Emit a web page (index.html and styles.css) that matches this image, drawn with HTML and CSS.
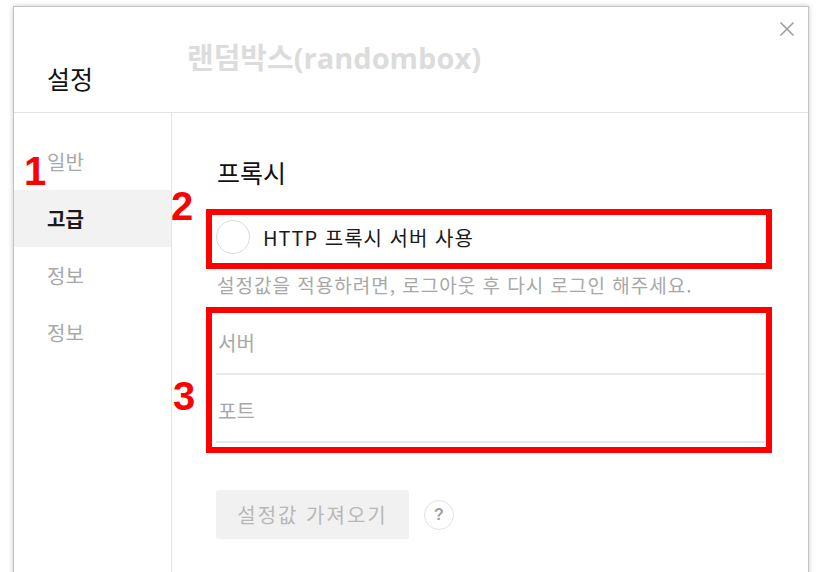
FILE: index.html
```html
<!DOCTYPE html>
<html lang="ko">
<head>
  <meta charset="UTF-8">
  <meta name="viewport" content="width=device-width, initial-scale=1.0">
  <title>설정</title>
  <link rel="stylesheet" href="styles.css">
</head>
<body>
  <div class="dialog">
    <div class="header">
      <h2>설정</h2>
      <span class="watermark">랜덤박스(randombox)</span>
      <button class="close" aria-label="닫기">
        <svg width="16" height="16" viewBox="0 0 16 16">
          <path d="M1.5 1.5 L14.5 14.5 M14.5 1.5 L1.5 14.5" stroke="#9a9a9a" stroke-width="1.5" fill="none"/>
        </svg>
      </button>
    </div>
    <div class="main">
      <ul class="sidebar">
        <li>일반</li>
        <li class="active">고급</li>
        <li>정보</li>
        <li>정보</li>
      </ul>
      <div class="content">
        <h3>프록시</h3>
        <label class="radio-row">
          <span class="radio"></span>
          <span>HTTP 프록시 서버 사용</span>
        </label>
        <p class="hint">설정값을 적용하려면, 로그아웃 후 다시 로그인 해주세요.</p>
        <div class="field">서버</div>
        <div class="field">포트</div>
        <div class="actions">
          <button class="import">설정값 가져오기</button>
          <span class="help">?</span>
        </div>
      </div>
    </div>
  </div>

  <!-- annotation marks -->
  <span class="mark mark-1">1</span>
  <span class="mark mark-2">2</span>
  <span class="mark mark-3">3</span>
  <div class="redbox box-2"></div>
  <div class="redbox box-3"></div>
</body>
</html>
```

FILE: styles.css
```css
body {
  margin: 0;
  background: #ffffff;
  font-family: "Noto Sans CJK KR", "Noto Sans", sans-serif;
  color: #222;
  overflow: hidden;
  height: 572px;
  position: relative;
}

.dialog {
  position: relative;
  margin: 6px 0 0 13px;
  width: 796px;
  height: 640px;
  box-sizing: border-box;
  border: 1px solid #c4c4c4;
  box-shadow: 0 0 5px rgba(0, 0, 0, 0.22);
  background: #fff;
}

.header {
  height: 105px;
  border-bottom: 1px solid #e3e3e3;
  box-sizing: content-box;
}

.header h2 {
  margin: 0;
  padding: 56px 0 0 33px;
  font-size: 25px;
  font-weight: 400;
  line-height: 30px;
  color: #111;
}

.watermark {
  position: absolute;
  left: 173px;
  top: 33px;
  font-family: "Open Sans", "Noto Sans CJK KR", sans-serif;
  font-weight: 700;
  font-size: 29px;
  line-height: 36px;
  color: #dcdcdc;
}

.close {
  position: absolute;
  right: 13px;
  top: 14px;
  padding: 0;
  border: none;
  background: none;
  width: 16px;
  height: 16px;
}

.main {
  display: flex;
  height: 530px;
}

.sidebar {
  list-style: none;
  margin: 0;
  padding: 20px 0 0 0;
  width: 158px;
  box-sizing: border-box;
  border-right: 1px solid #e3e3e3;
}

.sidebar li {
  height: 57px;
  line-height: 57px;
  padding-left: 33px;
  font-size: 20px;
  color: #a8a8a8;
}

.sidebar li.active {
  background: #f2f2f2;
  color: #1a1a1a;
  font-weight: 700;
}

.content {
  flex: 1;
  padding: 0 42px 0 44px;
}

.content h3 {
  margin: 44px 0 0 1px;
  font-size: 25px;
  font-weight: 400;
  line-height: 30px;
  color: #111;
}

.radio-row {
  display: flex;
  align-items: center;
  gap: 13px;
  height: 44px;
  margin-top: 28px;
  font-size: 20px;
  letter-spacing: 1px;
  color: #1a1a1a;
}

.radio {
  width: 34px;
  height: 34px;
  box-sizing: border-box;
  border: 1px solid #dcdcdc;
  border-radius: 50%;
}

.hint {
  margin: 14px 0 10px 1px;
  font-size: 19px;
  letter-spacing: 1px;
  line-height: 24px;
  color: #a8a8a8;
}

.field {
  padding: 22px 0 16px 2px;
  line-height: 28px;
  font-size: 20px;
  color: #a8a8a8;
  border-bottom: 2px solid #e8e8e8;
}

.actions {
  display: flex;
  align-items: center;
  gap: 15px;
  margin-top: 47px;
}

.import {
  width: 193px;
  height: 49px;
  padding: 0;
  border: none;
  border-radius: 3px;
  background: #f1f1f1;
  color: #b8b8b8;
  font-family: "Noto Sans CJK KR", sans-serif;
  font-size: 20px;
  letter-spacing: 2px;
}

.help {
  width: 30px;
  height: 30px;
  box-sizing: border-box;
  border: 1px solid #e2e2e2;
  border-radius: 50%;
  display: flex;
  align-items: center;
  justify-content: center;
  font-family: "Liberation Sans", sans-serif;
  font-weight: 700;
  font-size: 16px;
  color: #a0a0a0;
}

/* red annotation overlays */
.mark {
  position: absolute;
  font-family: "Liberation Sans", sans-serif;
  font-weight: 700;
  font-size: 40px;
  line-height: 1;
  color: #ff0000;
}

.mark-1 { left: 24px; top: 151px; }
.mark-2 { left: 171px; top: 186px; }
.mark-3 { left: 173px; top: 376px; }

.redbox {
  position: absolute;
  left: 206px;
  width: 566px;
  box-sizing: border-box;
  border: 6px solid #ff0000;
}

.box-2 { top: 209px; height: 60px; }
.box-3 { top: 307px; height: 146px; }
```
